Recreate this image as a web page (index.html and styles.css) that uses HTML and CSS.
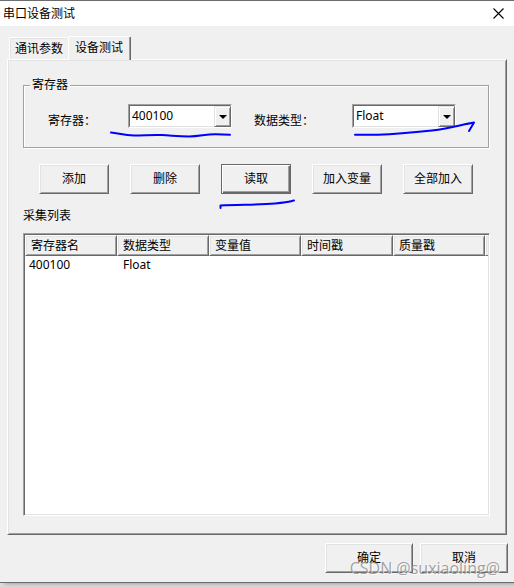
FILE: index.html
```html
<!DOCTYPE html>
<html lang="zh-CN">
<head>
  <meta charset="UTF-8" />
  <meta name="viewport" content="width=device-width, initial-scale=1.0" />
  <title>串口设备测试</title>
  <link rel="stylesheet" href="styles.css">
</head>
<body>
  <div class="dialog">
    <header class="titlebar">
      <h1>串口设备测试</h1>
      <button type="button" class="close" aria-label="关闭">
        <svg width="11" height="11" viewBox="0 0 11 11"><path d="M.5 .5l10 10M10.5 .5l-10 10" fill="none" stroke="#000" stroke-width="1.1" /></svg>
      </button>
    </header>

    <nav class="tabs" role="tablist">
      <button type="button" class="tab" role="tab" aria-selected="false">通讯参数</button>
      <button type="button" class="tab active" role="tab" aria-selected="true">设备测试</button>
    </nav>

    <main class="panel">
      <fieldset class="group">
        <legend>寄存器</legend>
        <label for="register">寄存器：</label>
        <div class="combo">
          <select id="register"><option>400100</option></select>
          <span class="arrow"></span>
        </div>
        <label for="datatype">数据类型：</label>
        <div class="combo">
          <select id="datatype"><option>Float</option></select>
          <span class="arrow"></span>
        </div>
      </fieldset>

      <div class="actions">
        <button type="button" class="btn">添加</button>
        <button type="button" class="btn">删除</button>
        <button type="button" class="btn default">读取</button>
        <button type="button" class="btn">加入变量</button>
        <button type="button" class="btn">全部加入</button>
      </div>

      <h2>采集列表</h2>
      <div class="list">
        <table>
          <thead>
            <tr><th>寄存器名</th><th>数据类型</th><th>变量值</th><th>时间戳</th><th>质量戳</th><th class="rest"></th></tr>
          </thead>
          <tbody>
            <tr><td>400100</td><td>Float</td><td></td><td></td><td></td><td></td></tr>
          </tbody>
        </table>
      </div>
    </main>

    <footer class="footer">
      <button type="button" class="btn">确定</button>
      <button type="button" class="btn">取消</button>
    </footer>

    <!-- pen marks -->
    <svg class="marks" width="514" height="587" viewBox="0 0 514 587">
      <path d="M111 132.500C118 133 124 135.500 134 135.500S152 134.500 162 135S178 136.500 189 136.500S206 134 216 134.300L230 134.700" />
      <path d="M355 134.700H378C398 134 413 132.500 432 130.500S462 124.500 474 122.500M467 124L474 122.500L469 131" />
      <path d="M220.500 208V205.500C240 204.500 259 205 275 203.500S288 202 294 200.500" />
    </svg>
    <span class="watermark">CSDN @suxiaoling@</span>
  </div>
</body>
</html>
```
FILE: styles.css
```css
* {
  box-sizing: border-box;
}
body {
  margin: 0;
  min-height: 100vh;
  padding-bottom: 4px;
  display: flex;
  background: #ddd;
  color: #000;
  font: 12px/16px "Noto Sans", "Noto Sans CJK SC", sans-serif;
}
button,
select {
  font: inherit;
  color: inherit;
}
h1,
h2 {
  margin: 0;
  font-size: 12px;
  font-weight: normal;
}
.dialog {
  position: relative;
  flex: 1;
  display: flex;
  flex-direction: column;
  background: #f0f0f0;
  border-top: 1px solid #6d6d6d;
  border-bottom: 1px solid #6d6d6d;
  box-shadow: 4px 0 5px #888;
}
.titlebar {
  display: flex;
  align-items: center;
  justify-content: space-between;
  height: 25px;
  padding: 0 10px 0 3px;
  background: #fff;
}
.close {
  display: flex;
  padding: 0;
  border: 0;
  background: none;
}

/* Tabs */
.tabs {
  display: flex;
  align-items: flex-end;
  padding: 10px 9px 0;
}
.tab {
  height: 22px;
  padding: 0 5px;
  background: #f0f0f0;
  border: 1px solid #fff;
  border-width: 1px 0 0 1px;
  border-radius: 2px 2px 0 0;
  box-shadow: inset 1px 1px 0 #e3e3e3;
}
.tab.active {
  height: 24px;
  margin-bottom: -1px;
  padding: 0 7px 2px 6px;
  border-right: 1px solid #696969;
  box-shadow: inset -1px 0 0 #a0a0a0;
  z-index: 1;
}
.panel {
  flex: 1;
  display: flex;
  flex-direction: column;
  margin: 0 7px;
  padding: 17px 16px 18px 15px;
  border: 1px solid;
  border-color: #fff #696969 #696969 #fff;
  box-shadow: inset 1px 1px 0 #e3e3e3, inset -1px -1px 0 #a0a0a0;
}

/* Register group */
.group {
  display: grid;
  grid-template-columns: 80px 104px 120px 104px;
  align-items: start;
  min-width: 0;
  margin: 0 1px 0 0;
  padding: 11px 8px 18px 24px;
  border: 1px solid #a0a0a0;
  box-shadow: 1px 1px 0 #fff, inset 1px 1px 0 #fff;
}
.group legend {
  margin-left: -18px;
  padding: 0 2px;
  background: #f0f0f0;
}
.group label {
  padding-top: 9px;
}
.combo + label {
  padding-left: 22px;
}
.combo {
  position: relative;
  height: 24px;
  border: 1px solid;
  border-color: #a0a0a0 #fff #fff #a0a0a0;
}
.combo select {
  display: block;
  width: 100%;
  height: 100%;
  padding: 0 18px 0 2px;
  appearance: none;
  background: #fff;
  border: 1px solid;
  border-color: #696969 #e3e3e3 #e3e3e3 #696969;
  border-radius: 0;
}
.arrow {
  position: absolute;
  top: 1px;
  right: 0;
  bottom: 0;
  width: 17px;
  display: grid;
  place-items: center;
  background: #f0f0f0;
  border: 1px solid;
  border-color: #e3e3e3 #696969 #696969 #e3e3e3;
  box-shadow: inset 1px 1px 0 #fff, inset -1px -1px 0 #a0a0a0;
  pointer-events: none;
}
.arrow::before {
  content: "";
  border: 4px solid transparent;
  border-top-color: #000;
  border-bottom: 0;
}

/* Buttons */
.btn {
  height: 30px;
  padding: 0;
  background: #f0f0f0;
  border: 1px solid;
  border-color: #fff #696969 #696969 #fff;
  box-shadow: inset 1px 1px 0 #e3e3e3, inset -1px -1px 0 #a0a0a0;
}
.btn.default {
  border-color: #696969;
  box-shadow: inset 1px 1px 0 #fff, inset -1px -1px 0 #696969, inset -2px -2px 0 #a0a0a0;
}
.actions {
  display: grid;
  grid-template-columns: repeat(5, 70px);
  gap: 21px;
  padding: 16px 16px 14px;
}

/* Collected values */
.list {
  flex: 1;
  margin-top: 9px;
  padding: 1px;
  background: #fff;
  border: 1px solid;
  border-color: #a0a0a0 #fff #fff #a0a0a0;
  box-shadow: inset 1px 1px 0 #696969, inset -1px -1px 0 #e3e3e3;
}
table {
  width: 100%;
  table-layout: fixed;
  border-collapse: separate;
  border-spacing: 0;
}
th {
  width: 92px;
  height: 21px;
  padding: 0 5px;
  text-align: left;
  font-weight: normal;
  background: #f0f0f0;
  border: 1px solid;
  border-color: #fff #696969 #696969 #fff;
  box-shadow: inset 1px 1px 0 #e3e3e3, inset -1px -1px 0 #a0a0a0;
}
th.rest {
  width: auto;
  padding: 0;
  border-right: 0;
  box-shadow: inset 1px 1px 0 #e3e3e3;
}
td {
  height: 18px;
  padding: 0 6px;
}
td:first-child {
  padding-left: 4px;
}

.footer {
  display: grid;
  grid-template-columns: 88px 88px;
  justify-content: end;
  gap: 7px;
  padding: 8px 6px 9px;
}

.marks {
  position: absolute;
  top: -1px;
  left: 0;
  fill: none;
  stroke: #00f;
  stroke-width: 2;
  stroke-linecap: round;
  stroke-linejoin: round;
  pointer-events: none;
}
.watermark {
  position: absolute;
  right: 14px;
  bottom: 4px;
  font: 16px/20px "Open Sans", sans-serif;
  color: rgba(140, 140, 140, 0.8);
  text-shadow: 1px 1px 0 rgba(255, 255, 255, 0.7);
  pointer-events: none;
}
```
